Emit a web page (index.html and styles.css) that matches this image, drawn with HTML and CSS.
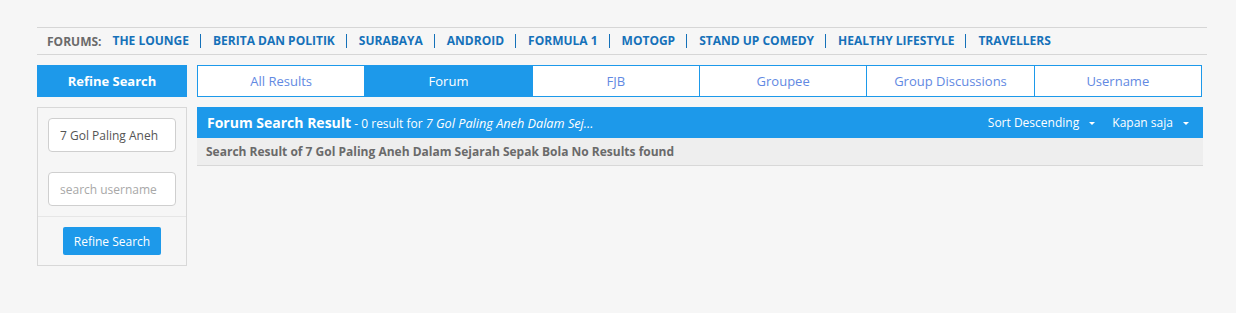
FILE: index.html
```html
<!DOCTYPE html>
<html lang="en">
<head>
  <meta charset="UTF-8">
  <title>Search Result</title>
  <link rel="stylesheet" href="styles.css">
</head>
<body>
<div class="wrap">
  <div class="forum-bar">
    <span class="forum-label">Forums:</span>
    <a href="#">The Lounge</a>
    <a href="#">Berita Dan Politik</a>
    <a href="#">Surabaya</a>
    <a href="#">Android</a>
    <a href="#">Formula 1</a>
    <a href="#">MotoGP</a>
    <a href="#">Stand Up Comedy</a>
    <a href="#">Healthy Lifestyle</a>
    <a href="#">Travellers</a>
  </div>

  <div class="main">
    <div class="sidebar">
      <div class="side-title">Refine Search</div>
      <div class="side-box">
        <div class="side-fields">
          <input class="field" type="text" value="7 Gol Paling Aneh Dalam Sejarah Sepak Bola">
          <input class="field" type="text" placeholder="search username">
        </div>
        <div class="side-foot">
          <button class="btn">Refine Search</button>
        </div>
      </div>
    </div>

    <div class="results">
      <div class="tabs">
        <a href="#">All Results</a>
        <a href="#" class="active">Forum</a>
        <a href="#">FJB</a>
        <a href="#">Groupee</a>
        <a href="#">Group Discussions</a>
        <a href="#">Username</a>
      </div>
      <div class="result-head">
        <div class="result-title">
          <strong>Forum Search Result</strong> - 0 result for <em>7 Gol Paling Aneh Dalam Sej...</em>
        </div>
        <div class="result-tools">
          <span class="drop">Sort Descending <i class="caret"></i></span>
          <span class="drop">Kapan saja <i class="caret"></i></span>
        </div>
      </div>
      <div class="result-empty">Search Result of 7 Gol Paling Aneh Dalam Sejarah Sepak Bola No Results found</div>
    </div>
  </div>
</div>
</body>
</html>
```

FILE: styles.css
```css
body {
  font-family: 'Open Sans', sans-serif;
  background-color: #f6f6f6;
  margin: 0;
  padding: 0;
}

.wrap {
  width: 1170px;
  margin-left: 37px;
  padding-top: 27px;
}

.forum-bar {
  display: flex;
  align-items: center;
  height: 26px;
  border-top: 1px solid #d6d6d6;
  border-bottom: 1px solid #d6d6d6;
  padding-left: 10px;
  font-size: 12px;
  font-weight: 700;
  text-transform: uppercase;
}

.forum-label {
  color: #6a6a6a;
  margin-right: 11px;
}

.forum-bar a {
  color: #1571b9;
  text-decoration: none;
  padding: 0 11px 0 12px;
  line-height: 14px;
  border-left: 1px solid #1571b9;
}

.forum-bar a:nth-of-type(1) {
  border-left: none;
  padding-left: 0;
}

.main {
  display: flex;
  gap: 10px;
  margin-top: 10px;
}

.sidebar {
  width: 150px;
  flex-shrink: 0;
}

.side-title {
  background-color: #1d99ea;
  color: white;
  font-size: 13px;
  font-weight: 700;
  text-align: center;
  height: 32px;
  line-height: 32px;
}

.side-box {
  margin-top: 10px;
  border: 1px solid #d8d8d8;
}

.side-fields {
  display: flex;
  flex-direction: column;
  gap: 20px;
  padding: 10px 10px 10px;
  border-bottom: 1px solid #e6e6e6;
}

.field {
  width: 128px;
  height: 34px;
  box-sizing: border-box;
  border: 1px solid #cfcfcf;
  border-radius: 4px;
  background: white;
  padding: 0 16px 0 11px;
  font-family: 'Open Sans', sans-serif;
  font-size: 12px;
  color: #555;
  outline: none;
}

.field::placeholder {
  color: #a8a8a8;
}

.side-foot {
  text-align: center;
  padding: 10px 0 10px;
}

.btn {
  background-color: #1d99ea;
  color: white;
  border: none;
  border-radius: 2px;
  width: 98px;
  height: 28px;
  font-family: 'Open Sans', sans-serif;
  font-size: 12px;
  cursor: pointer;
}

.results {
  width: 1006px;
}

.tabs {
  display: flex;
  width: 1005px;
  height: 32px;
  box-sizing: border-box;
  border: 1px solid #1d99ea;
  background: white;
}

.tabs a {
  flex: 1;
  text-align: center;
  line-height: 30px;
  font-size: 13px;
  color: #6289e2;
  text-decoration: none;
  border-left: 1px solid #1d99ea;
}

.tabs a:first-child {
  border-left: none;
}

.tabs a.active {
  background-color: #1d99ea;
  color: white;
}

.result-head {
  display: flex;
  justify-content: space-between;
  align-items: center;
  margin-top: 10px;
  height: 31px;
  background-color: #1d99ea;
  color: white;
  padding: 0 14px 1px 10px;
  box-sizing: border-box;
  font-size: 12px;
}

.result-title strong {
  font-size: 14px;
}

.result-title em {
  font-size: 12.7px;
}

.result-tools {
  display: flex;
  gap: 17px;
}

.caret {
  display: inline-block;
  width: 0;
  height: 0;
  margin-left: 7px;
  vertical-align: middle;
  border-left: 3px solid transparent;
  border-right: 3px solid transparent;
  border-top: 3px solid white;
}

.result-empty {
  background-color: #eeeeee;
  border-bottom: 1px solid #d8d8d8;
  height: 27px;
  line-height: 27px;
  padding-left: 9px;
  font-size: 12px;
  font-weight: 700;
  color: #6a6a6a;
}
```
